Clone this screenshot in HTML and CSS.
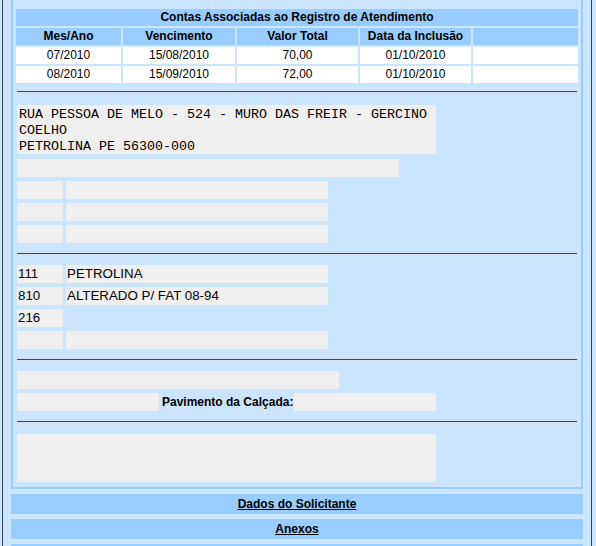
FILE: index.html
```html
<!DOCTYPE html>
<html lang="pt">
<head>
<meta charset="utf-8">
<title>Registro de Atendimento</title>
<link rel="stylesheet" href="styles.css">
</head>
<body>
<div class="outer">
  <div class="panel">
    <table class="contas">
      <colgroup>
        <col class="c1"><col class="c2"><col class="c3"><col class="c4"><col class="c5">
      </colgroup>
      <tr><th colspan="5" class="title">Contas Associadas ao Registro de Atendimento</th></tr>
      <tr><th>Mes/Ano</th><th>Vencimento</th><th>Valor Total</th><th>Data da Inclusão</th><th></th></tr>
      <tr><td>07/2010</td><td>15/08/2010</td><td>70,00</td><td>01/10/2010</td><td></td></tr>
      <tr><td>08/2010</td><td>15/09/2010</td><td>72,00</td><td>01/10/2010</td><td></td></tr>
    </table>

    <div class="form">
      <div class="rule first"></div>
      <div class="section s1">
        <div class="box addr">RUA PESSOA DE MELO - 524 - MURO DAS FREIR - GERCINO COELHO<br>PETROLINA PE 56300-000</div>
        <div class="box w382 gap5"></div>
        <div class="pair"><div class="box sm"></div><div class="box lg"></div></div>
        <div class="pair"><div class="box sm"></div><div class="box lg"></div></div>
        <div class="pair"><div class="box sm"></div><div class="box lg"></div></div>
      </div>
      <div class="rule"></div>
      <div class="section">
        <div class="pair"><div class="box sm">111</div><div class="box lg">PETROLINA</div></div>
        <div class="pair"><div class="box sm">810</div><div class="box lg">ALTERADO P/ FAT 08-94</div></div>
        <div class="pair"><div class="box sm">216</div></div>
        <div class="pair"><div class="box sm"></div><div class="box lg"></div></div>
      </div>
      <div class="rule"></div>
      <div class="section">
        <div class="box w322"></div>
        <div class="pair"><div class="box w142"></div><div class="label">Pavimento da Calçada:</div><div class="box w142"></div></div>
      </div>
      <div class="rule last"></div>
      <div class="section">
        <div class="box big"></div>
      </div>
    </div>
  </div>
  <div class="bar"><a href="#">Dados do Solicitante</a></div>
  <div class="bar"><a href="#">Anexos</a></div>
  <div class="bar"></div>
</div>
</body>
</html>
```
FILE: styles.css
```css
html, body {
  margin: 0;
  padding: 0;
  background: #cce5ff;
  height: 546px;
  overflow: hidden;
}
body {
  font-family: "Liberation Sans", Arial, sans-serif;
  font-size: 12px;
  color: #000;
}
.outer {
  margin-left: 2px;
  border-left: 1px solid #2f4560;
  border-right: 1px solid #2f4560;
  background: #cce5ff;
  padding: 0 8px;
  box-sizing: border-box;
  width: 590px;
  min-height: 560px;
  display: flex;
  flex-direction: column;
  gap: 5px;
}
.panel {
  border: 2px solid #99ccff;
  border-top: none;
  padding: 7px 1px 5px 1px;
  background: #cce5ff;
}
.contas {
  width: 566px;
  border-spacing: 2px;
  table-layout: fixed;
  margin: 0;
}
.c1 { width: 105px; }
.c2 { width: 112px; }
.c3 { width: 121px; }
.c4 { width: 111px; }
.c5 { width: 105px; }
.contas th, .contas td {
  height: 17px;
  padding: 0;
  text-align: center;
  line-height: 17px;
  font-size: 12px;
  white-space: nowrap;
  overflow: hidden;
}
.contas th {
  background: #99ccff;
  font-weight: bold;
}
.contas td {
  background: #ffffff;
}
.form {
  padding-left: 3px;
  display: flex;
  flex-direction: column;
}
.rule {
  width: 560px;
  height: 0;
  border-top: 1px solid #3e4650;
  border-bottom: 1px solid #d5dde6;
  margin: 10px 0 10px 0;
}
.rule.first { margin-top: 6px; margin-bottom: 12px; }
.rule.last { margin-bottom: 11px; }
.section {
  display: flex;
  flex-direction: column;
  gap: 4px;
}
.s1 .gap5 { margin-top: 1px; }
.pair {
  display: flex;
  gap: 3px;
  height: 18px;
}
.box {
  background: #efefef;
  height: 18px;
  line-height: 18px;
  font-size: 13.33px;
  padding-left: 1px;
  box-sizing: border-box;
  white-space: nowrap;
  overflow: hidden;
}
.sm { width: 46px; }
.lg { width: 262px; }
.w382 { width: 382px; }
.w322 { width: 322px; }
.w142 { width: 142px; }
.label {
  width: 129px;
  font-weight: bold;
  font-size: 12px;
  line-height: 18px;
  text-align: right;
  white-space: nowrap;
}
.addr {
  width: 419px;
  height: 49px;
  font-family: "Liberation Mono", "Courier New", monospace;
  font-size: 13.33px;
  line-height: 16px;
  padding: 2px 0 0 2px;
  white-space: normal;
}
.big {
  width: 419px;
  height: 48px;
}
.bar {
  background: #99ccff;
  height: 20px;
  line-height: 20px;
  text-align: center;
  font-weight: bold;
  font-size: 12px;
  flex: none;
}
.bar a {
  color: #000;
  text-decoration: underline;
}
```
